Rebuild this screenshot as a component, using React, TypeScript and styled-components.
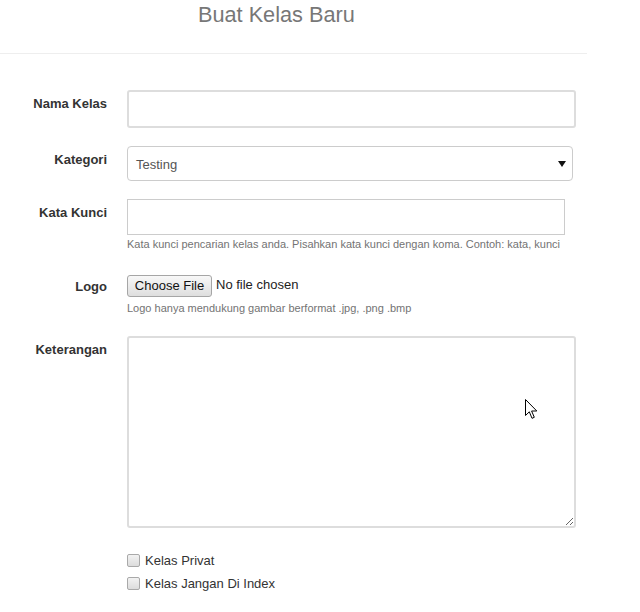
import React from "react";
import styled, { createGlobalStyle } from "styled-components";

const Global = createGlobalStyle`
  html, body { margin: 0; padding: 0; background: #fff; }
  body { font-family: "Liberation Sans", Arial, sans-serif; color: #333; }
  * { box-sizing: border-box; }
`;

const Page = styled.div`
  position: relative;
  width: 640px;
  height: 612px;
  overflow: hidden;
`;

const Header = styled.header`
  width: 587px;
  padding: 3px 0 26px 198px;
  border-bottom: 1px solid #eeeeee;
`;

const Title = styled.h1`
  margin: 0;
  font-size: 21.7px;
  line-height: 24px;
  font-weight: normal;
  color: #777;
`;

const Form = styled.form`
  padding-top: 36px;
  display: flex;
  flex-direction: column;
`;

const Row = styled.div<{ $mb?: number }>`
  display: grid;
  grid-template-columns: 107px 1fr;
  column-gap: 20px;
  margin-bottom: ${(p) => p.$mb ?? 18}px;
`;

const Label = styled.label<{ $pt?: number }>`
  text-align: right;
  font-size: 13px;
  font-weight: bold;
  line-height: 18px;
  padding-top: ${(p) => p.$pt ?? 5}px;
  color: #333;
`;

const Control = styled.div`
  display: flex;
  flex-direction: column;
  align-items: flex-start;
`;

const TextInput = styled.input<{ $w: number; $h: number; $thick?: boolean; $radius?: number }>`
  width: ${(p) => p.$w}px;
  height: ${(p) => p.$h}px;
  border: ${(p) => (p.$thick ? "2px solid #dddddd" : "1px solid #cccccc")};
  border-radius: ${(p) => p.$radius ?? 0}px;
  padding: 0 8px;
  font: 13px "Liberation Sans", Arial, sans-serif;
  outline: none;
  background: #fff;
`;

const SelectBox = styled.div`
  width: 446px;
  height: 35px;
  border: 1px solid #cccccc;
  border-radius: 4px;
  padding: 1px 6px 0 8px;
  display: flex;
  align-items: center;
  justify-content: space-between;
  font-size: 13px;
  color: #555;
`;

const Help = styled.span<{ $mt: number }>`
  display: block;
  margin-top: ${(p) => p.$mt}px;
  font-size: 11px;
  line-height: 15px;
  color: #737373;
`;

const FileRow = styled.div`
  display: flex;
  align-items: center;
  gap: 4px;
  height: 22px;
`;

const FileButton = styled.button`
  height: 22px;
  width: 85px;
  padding: 0;
  border: 1px solid #a6a6a6;
  border-radius: 3px;
  background: linear-gradient(#f8f8f8, #dedede);
  font: 13px "Liberation Sans", Arial, sans-serif;
  color: #111;
  line-height: 20px;
`;

const FileStatus = styled.span`
  font-size: 13px;
  color: #222;
  margin-top: -3px;
`;

const TextArea = styled.textarea`
  width: 449px;
  height: 192px;
  border: 2px solid #dddddd;
  border-radius: 3px;
  resize: both;
  outline: none;
  font: 13px "Liberation Sans", Arial, sans-serif;
`;

const CheckList = styled.div`
  margin-left: 127px;
  display: flex;
  flex-direction: column;
`;

const CheckRow = styled.label`
  display: flex;
  align-items: center;
  gap: 5px;
  height: 23px;
  font-size: 13px;
  color: #333;
`;

const Box = styled.span`
  width: 13px;
  height: 13px;
  border: 1px solid #a9a9a9;
  border-radius: 2px;
  background: linear-gradient(#f2f2f2, #dcdcdc);
`;

const Cursor = styled.svg`
  position: absolute;
  left: 525px;
  top: 399px;
`;

export default function App() {
  return (
    <Page>
      <Global />
      <Header>
        <Title>Buat Kelas Baru</Title>
      </Header>
      <Form onSubmit={(e) => e.preventDefault()}>
        <Row>
          <Label>Nama Kelas</Label>
          <Control>
            <TextInput $w={449} $h={38} $thick $radius={3} />
          </Control>
        </Row>
        <Row>
          <Label>Kategori</Label>
          <Control>
            <SelectBox>
              <span>Testing</span>
              <svg width="8" height="6" viewBox="0 0 8 6">
                <path d="M0 0 H8 L4 6 Z" fill="#111" />
              </svg>
            </SelectBox>
          </Control>
        </Row>
        <Row $mb={23}>
          <Label>Kata Kunci</Label>
          <Control>
            <TextInput $w={438} $h={36} />
            <Help $mt={2}>
              Kata kunci pencarian kelas anda. Pisahkan kata kunci dengan koma. Contoh: kata, kunci
            </Help>
          </Control>
        </Row>
        <Row $mb={20}>
          <Label $pt={3}>Logo</Label>
          <Control>
            <FileRow>
              <FileButton type="button">Choose File</FileButton>
              <FileStatus>No file chosen</FileStatus>
            </FileRow>
            <Help $mt={4}>Logo hanya mendukung gambar berformat .jpg, .png .bmp</Help>
          </Control>
        </Row>
        <Row $mb={21}>
          <Label>Keterangan</Label>
          <Control>
            <TextArea />
          </Control>
        </Row>
        <CheckList>
          <CheckRow>
            <Box />
            Kelas Privat
          </CheckRow>
          <CheckRow>
            <Box />
            Kelas Jangan Di Index
          </CheckRow>
        </CheckList>
      </Form>
      <Cursor width="13" height="21" viewBox="0 0 13 21">
        <path
          d="M0.5 0.5 L0.5 16.5 L4.3 12.8 L7 19.3 L9.3 18.3 L6.6 12 L11.8 12 Z"
          fill="#fff"
          stroke="#000"
          strokeWidth="1"
          strokeLinejoin="miter"
        />
      </Cursor>
    </Page>
  );
}
